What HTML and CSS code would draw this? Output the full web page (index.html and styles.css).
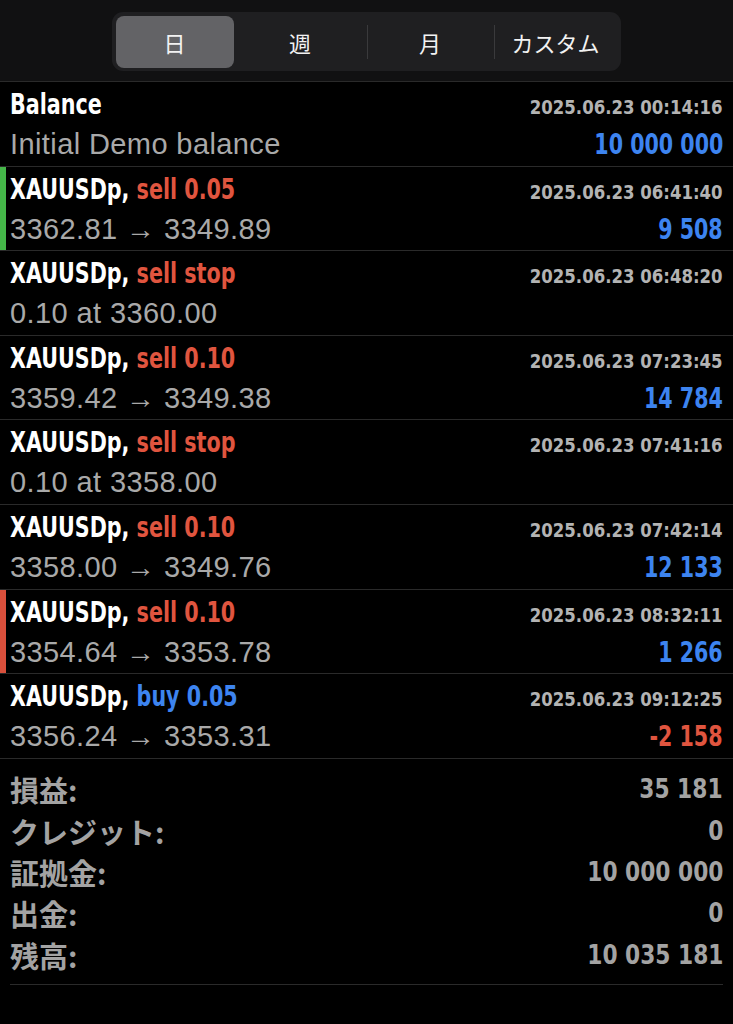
FILE: index.html
```html
<!DOCTYPE html>
<html lang="ja">
<head>
<meta charset="UTF-8">
<meta name="viewport" content="width=device-width, initial-scale=1.0">
<title>履歴</title>
<link rel="stylesheet" href="styles.css">
</head>
<body>

<!-- 期間切り替え -->
<div class="topbar">
 <div class="segmented">
  <div class="seg seg-day active">日</div>
  <div class="seg seg-week">週</div>
  <div class="seg seg-month sep">月</div>
  <div class="seg seg-custom sep">カスタム</div>
 </div>
</div>

<!-- 取引履歴 -->
<div class="history">
 <div class="row">
  <div class="line top">
   <span class="title">Balance</span>
   <span class="date">2025.06.23 00:14:16</span>
  </div>
  <div class="line bottom">
   <span class="sub">Initial Demo balance</span>
   <span class="amount blue">10 000 000</span>
  </div>
 </div>

 <div class="row mark-green">
  <div class="line top">
   <span class="title">XAUUSDp, <span class="red">sell 0.05</span></span>
   <span class="date">2025.06.23 06:41:40</span>
  </div>
  <div class="line bottom">
   <span class="sub">3362.81 → 3349.89</span>
   <span class="amount blue">9 508</span>
  </div>
 </div>

 <div class="row">
  <div class="line top">
   <span class="title">XAUUSDp, <span class="red">sell stop</span></span>
   <span class="date">2025.06.23 06:48:20</span>
  </div>
  <div class="line bottom">
   <span class="sub">0.10 at 3360.00</span>
  </div>
 </div>

 <div class="row">
  <div class="line top">
   <span class="title">XAUUSDp, <span class="red">sell 0.10</span></span>
   <span class="date">2025.06.23 07:23:45</span>
  </div>
  <div class="line bottom">
   <span class="sub">3359.42 → 3349.38</span>
   <span class="amount blue">14 784</span>
  </div>
 </div>

 <div class="row">
  <div class="line top">
   <span class="title">XAUUSDp, <span class="red">sell stop</span></span>
   <span class="date">2025.06.23 07:41:16</span>
  </div>
  <div class="line bottom">
   <span class="sub">0.10 at 3358.00</span>
  </div>
 </div>

 <div class="row">
  <div class="line top">
   <span class="title">XAUUSDp, <span class="red">sell 0.10</span></span>
   <span class="date">2025.06.23 07:42:14</span>
  </div>
  <div class="line bottom">
   <span class="sub">3358.00 → 3349.76</span>
   <span class="amount blue">12 133</span>
  </div>
 </div>

 <div class="row mark-red">
  <div class="line top">
   <span class="title">XAUUSDp, <span class="red">sell 0.10</span></span>
   <span class="date">2025.06.23 08:32:11</span>
  </div>
  <div class="line bottom">
   <span class="sub">3354.64 → 3353.78</span>
   <span class="amount blue">1 266</span>
  </div>
 </div>

 <div class="row">
  <div class="line top">
   <span class="title">XAUUSDp, <span class="blue">buy 0.05</span></span>
   <span class="date">2025.06.23 09:12:25</span>
  </div>
  <div class="line bottom">
   <span class="sub">3356.24 → 3353.31</span>
   <span class="amount red">-2 158</span>
  </div>
 </div>
</div>

<!-- 合計 -->
<div class="summary">
 <div class="sum-row"><span class="sum-label">損益:</span><span class="sum-val">35 181</span></div>
 <div class="sum-row"><span class="sum-label">クレジット:</span><span class="sum-val">0</span></div>
 <div class="sum-row"><span class="sum-label">証拠金:</span><span class="sum-val">10 000 000</span></div>
 <div class="sum-row"><span class="sum-label">出金:</span><span class="sum-val">0</span></div>
 <div class="sum-row"><span class="sum-label">残高:</span><span class="sum-val">10 035 181</span></div>
</div>

</body>
</html>
```

FILE: styles.css
```css
/* 全体 */
body {
margin: 0;
background: #000;
color: #fff;
font-family: "Liberation Sans", "Noto Sans CJK JP", sans-serif;
}

/* 上部バー */
.topbar {
height: 82px;
background: #111112;
border-bottom: 1px solid #2a2a2a;
display: flex;
justify-content: center;
align-items: flex-start;
padding-top: 12px;
box-sizing: border-box;
}

.segmented {
display: flex;
width: 509px;
height: 59px;
padding: 3.5px;
box-sizing: border-box;
background: #1f1f21;
border-radius: 11px;
}

.seg {
display: flex;
align-items: center;
justify-content: center;
font-family: "Noto Sans CJK JP", sans-serif;
font-size: 22px;
color: #f2f2f2;
position: relative;
}

.seg-day { width: 118px; }
.seg-week { width: 133px; }
.seg-month { width: 127px; }
.seg-custom { flex: 1; }

.seg.active {
background: #636366;
border-radius: 8px;
}

.seg.sep::before {
content: "";
position: absolute;
left: 0;
top: 9px;
bottom: 9px;
width: 1px;
background: #3a3a3c;
}

/* 履歴の行 */
.row {
height: 84.6px;
box-sizing: border-box;
border-bottom: 1px solid #2a2a2a;
padding: 4px 10px 0 10px;
position: relative;
}

.mark-green::before,
.mark-red::before {
content: "";
position: absolute;
left: 0;
top: 0;
bottom: 0;
width: 6px;
}

.mark-green::before { background: #45b649; }
.mark-red::before { background: #d9503c; }

.line {
display: flex;
justify-content: space-between;
align-items: baseline;
}

.line.top { height: 38px; line-height: 38px; }
.line.bottom { height: 40px; line-height: 40px; }

/* 細めの太字（横に詰める） */
.title,
.date,
.amount,
.sum-val {
font-family: "DejaVu Sans Condensed", "DejaVu Sans", sans-serif;
font-stretch: condensed;
font-weight: bold;
white-space: nowrap;
}

.title {
font-size: 28px;
color: #fff;
transform: scaleX(0.82);
transform-origin: left center;
}

.date {
font-size: 20px;
color: #b3b3b3;
transform: scaleX(0.92);
transform-origin: right center;
}

.sub {
font-size: 29px;
letter-spacing: 0.4px;
color: #a9a9a9;
white-space: nowrap;
}

.amount {
font-size: 29px;
transform: scaleX(0.79);
transform-origin: right center;
}

.red { color: #e0553f; }
.blue { color: #3d84f0; }

/* 合計 */
.summary {
margin: 0 10px;
padding: 10px 0 9px;
border-bottom: 1px solid #2a2a2a;
color: #a3a3a3;
}

.sum-row {
display: flex;
justify-content: space-between;
align-items: center;
height: 41.3px;
}

.sum-label {
font-family: "Noto Sans CJK JP", sans-serif;
font-weight: bold;
font-size: 29px;
}

.sum-val {
font-size: 26px;
transform: scaleX(0.93);
transform-origin: right center;
}
```
